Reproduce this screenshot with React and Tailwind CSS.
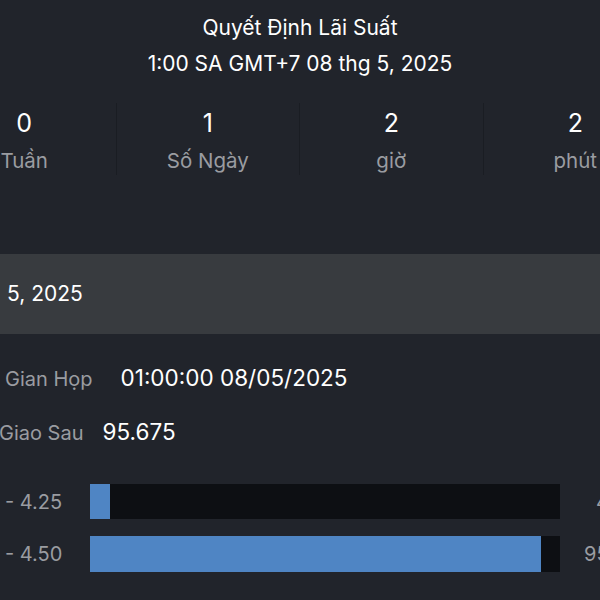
export default function App() {
  const units = [
    { value: "0", label: "Tuần" },
    { value: "1", label: "Số Ngày" },
    { value: "2", label: "giờ" },
    { value: "2", label: "phút" },
  ];

  const bars = [
    { label: "- 4.25", fill: 20, pct: "4.3%", pad: 36, h: "h-[35px]" },
    { label: "- 4.50", fill: 451, pct: "95.7%", pad: 24, h: "h-[36px]" },
  ];

  return (
    <div className="w-[600px] h-[600px] overflow-hidden bg-[#21242b] text-white font-['Inter',sans-serif]">
      {/* header */}
      <div className="pt-[10px] text-center leading-[36px]">
        <div className="text-[21px]">Quyết Định Lãi Suất</div>
        <div className="text-[21px]">1:00 SA GMT+7 08 thg 5, 2025</div>
      </div>

      {/* countdown */}
      <div className="mt-[21px] flex -ml-[67px]">
        {units.map((u, i) => (
          <div
            key={i}
            className={`w-[183.5px] shrink-0 h-[72px] flex flex-col items-center ${
              i < 3 ? "border-r border-[#1a1d23]" : ""
            }`}
          >
            <div className="pt-[6px] text-[25px] leading-[28px]">{u.value}</div>
            <div className="mt-[12px] text-[20.5px] leading-[24px] text-[#9a9ca1]">
              {u.label}
            </div>
          </div>
        ))}
      </div>

      {/* selected date band */}
      <div className="mt-[79px] h-[80px] bg-[#383b3f] flex items-center pl-[7px] text-[21px]">
        5, 2025
      </div>

      {/* details */}
      <div className="mt-[26px] h-[36px] flex items-baseline pt-[1px] whitespace-nowrap">
        <span className="pl-[5px] text-[20px] text-[#9a9ca1]">Gian Họp</span>
        <span className="ml-[28px] text-[22.5px]">01:00:00 08/05/2025</span>
      </div>
      <div className="mt-[18px] h-[36px] flex items-baseline pt-[1px] whitespace-nowrap">
        <span className="-ml-[1px] text-[20px] text-[#9a9ca1]">Giao Sau</span>
        <span className="ml-[19px] text-[22.5px]">95.675</span>
      </div>

      {/* probability bars */}
      <div className="mt-[34px] flex flex-col gap-[17px]">
        {bars.map((b, i) => (
          <div key={i} className={`flex items-center ${b.h} whitespace-nowrap`}>
            <div className="w-[90px] shrink-0 pl-[5px] text-[20px] text-[#9a9ca1]">
              {b.label}
            </div>
            <div className="w-[470px] h-full shrink-0 bg-[#0d0f13] flex">
              <div className="h-full bg-[#4f85c4]" style={{ width: b.fill }} />
            </div>
            <div
              className="shrink-0 text-[20px] text-[#9a9ca1]"
              style={{ paddingLeft: b.pad }}
            >
              {b.pct}
            </div>
          </div>
        ))}
      </div>
    </div>
  );
}
